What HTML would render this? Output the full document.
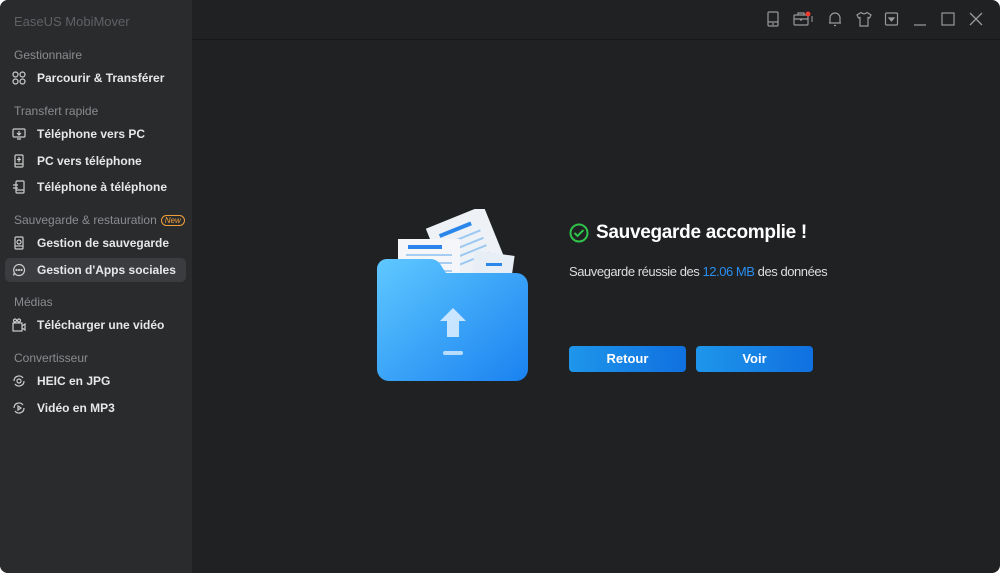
<!DOCTYPE html>
<html><head><meta charset="utf-8"><style>
*{margin:0;padding:0;box-sizing:border-box}
html,body{width:1000px;height:573px;background:#fff;overflow:hidden;font-family:"Liberation Sans",sans-serif}
.win{position:absolute;left:0;top:0;width:1000px;height:573px;border-radius:8px;overflow:hidden;background:#202123}
.side{position:absolute;left:0;top:0;width:192px;height:573px;background:#2a2b2d}
.title{position:absolute;left:14px;top:14px;font-size:13px;color:#5f6165}
.sec{position:absolute;left:14px;font-size:12px;color:#8a8c90}
.it{position:absolute;left:5px;width:181px;height:24px;font-size:12px;color:#e6e7e9;font-weight:bold;line-height:24px;padding-left:32px;border-radius:5px}
.it svg{position:absolute;left:7px;top:5px}
.act{background:#3b3c3f}
.new{display:inline-block;font-size:8px;font-style:italic;color:#f0a03a;border:1px solid #f0a03a;border-radius:6px;padding:0 3px;line-height:9px;margin-left:4px;vertical-align:1px}
.hline{position:absolute;left:192px;top:39px;width:808px;height:1px;background:#161718}
.btn{position:absolute;top:346px;width:117px;height:26px;border-radius:4px;background:linear-gradient(90deg,#1e96ea,#1070e0);color:#fff;font-size:13px;font-weight:bold;text-align:center;line-height:26px}
.ic{position:absolute;top:11px}
</style></head><body><div class="win">
<div class="side">
<div class="title">EaseUS MobiMover</div>
<div class="sec" style="top:48px">Gestionnaire</div>
<div class="it" style="top:66px"><svg width="14" height="14" viewBox="0 0 14 14" fill="none" stroke="#ccc" stroke-width="1.2"><circle cx="3.5" cy="3.5" r="2.5"/><circle cx="10.5" cy="3.5" r="2.5"/><circle cx="3.5" cy="10.5" r="2.5"/><circle cx="10.5" cy="10.5" r="2.5"/></svg>Parcourir &amp; Transférer</div>
<div class="sec" style="top:104px">Transfert rapide</div>
<div class="it" style="top:122px"><svg width="14" height="14" viewBox="0 0 14 14" fill="none" stroke="#ccc" stroke-width="1.2"><rect x="1" y="2" width="12" height="8" rx="1"/><path d="M5 12h4M7 4v4M5 6l2 2 2-2"/></svg>Téléphone vers PC</div>
<div class="it" style="top:149px"><svg width="14" height="14" viewBox="0 0 14 14" fill="none" stroke="#ccc" stroke-width="1.2"><rect x="3" y="1" width="8" height="12" rx="1"/><path d="M7 3v5M5 5.5h4M3 10h8"/></svg>PC vers téléphone</div>
<div class="it" style="top:175px"><svg width="14" height="14" viewBox="0 0 14 14" fill="none" stroke="#ccc" stroke-width="1.2"><rect x="4" y="1" width="8" height="12" rx="1"/><path d="M1 5h5M1 8h5M4 10h8"/></svg>Téléphone à téléphone</div>
<div class="sec" style="top:213px">Sauvegarde &amp; restauration<span class="new">New</span></div>
<div class="it" style="top:231px"><svg width="14" height="14" viewBox="0 0 14 14" fill="none" stroke="#ccc" stroke-width="1.2"><rect x="3" y="1" width="8" height="12" rx="1"/><circle cx="7" cy="6" r="2"/><path d="M3 10h8"/></svg>Gestion de sauvegarde</div>
<div class="it act" style="top:258px"><svg width="14" height="14" viewBox="0 0 14 14" fill="none" stroke="#ccc" stroke-width="1.2"><path d="M7 1.5a5.5 5.5 0 1 1-4.5 8.6L1.5 12.5l.8-3A5.5 5.5 0 0 1 7 1.5z"/><circle cx="4.5" cy="7" r=".5"/><circle cx="7" cy="7" r=".5"/><circle cx="9.5" cy="7" r=".5"/></svg>Gestion d'Apps sociales</div>
<div class="sec" style="top:295px">Médias</div>
<div class="it" style="top:313px"><svg width="14" height="14" viewBox="0 0 14 14" fill="none" stroke="#ccc" stroke-width="1.2"><circle cx="3" cy="2.5" r="1.5"/><circle cx="7" cy="2.5" r="1.5"/><rect x="1" y="5" width="9" height="8"/><path d="M10 8l3-2v6l-3-2"/></svg>Télécharger une vidéo</div>
<div class="sec" style="top:351px">Convertisseur</div>
<div class="it" style="top:369px"><svg width="14" height="14" viewBox="0 0 14 14" fill="none" stroke="#ccc" stroke-width="1.2"><path d="M2 7a5 5 0 0 1 9-3M12 7a5 5 0 0 1-9 3"/><circle cx="7" cy="7" r="2"/></svg>HEIC en JPG</div>
<div class="it" style="top:396px"><svg width="14" height="14" viewBox="0 0 14 14" fill="none" stroke="#ccc" stroke-width="1.2"><path d="M2 7a5 5 0 0 1 9-3M12 7a5 5 0 0 1-9 3"/><path d="M6 5v4l3-2z"/></svg>Vidéo en MP3</div>
</div>
<div class="hline"></div>
<svg class="ic" style="left:766px" width="14" height="16" viewBox="0 0 14 16" fill="none" stroke="#999" stroke-width="1.2"><rect x="2" y="1" width="10" height="14" rx="1"/><path d="M2 11h10M6 13h2"/></svg>
<svg class="ic" style="left:793px" width="20" height="16" viewBox="0 0 20 16" fill="none" stroke="#999" stroke-width="1.2"><rect x="1" y="4" width="14" height="10" rx="1"/><path d="M5 4V2h6v2M1 8h14M7 9h2"/><circle cx="15" cy="3" r="2.5" fill="#f03a2e" stroke="none"/><path d="M19 5v6" stroke="#888"/></svg>
<svg class="ic" style="left:828px" width="14" height="16" viewBox="0 0 14 16" fill="none" stroke="#999" stroke-width="1.2"><path d="M2 12V7a5 5 0 0 1 10 0v5zM1 12h12M6 14.5h2"/></svg>
<svg class="ic" style="left:856px" width="16" height="16" viewBox="0 0 16 16" fill="none" stroke="#999" stroke-width="1.2"><path d="M5 1.5L1 4l1.5 3L4 6.5V15h8V6.5l1.5.5L15 4l-4-2.5Q8 4 5 1.5z"/></svg>
<svg class="ic" style="left:884px" width="15" height="16" viewBox="0 0 15 16" fill="none" stroke="#999" stroke-width="1.2"><rect x="1.5" y="2" width="12" height="12" rx="1"/><path d="M5 7h5l-2.5 3z" fill="#999"/></svg>
<svg class="ic" style="left:912px" width="16" height="16" viewBox="0 0 16 16" stroke="#999" stroke-width="1.2"><path d="M2 14h12"/></svg>
<svg class="ic" style="left:940px" width="16" height="16" viewBox="0 0 16 16" fill="none" stroke="#999" stroke-width="1.2"><rect x="2" y="2" width="12" height="12"/></svg>
<svg class="ic" style="left:968px" width="16" height="16" viewBox="0 0 16 16" stroke="#999" stroke-width="1.3"><path d="M2 2l12 12M14 2L2 14"/></svg>

<svg style="position:absolute;left:376px;top:209px" width="156" height="172" viewBox="0 0 156 172">
<defs><linearGradient id="f" x1="0" y1="0" x2="1" y2="1"><stop offset="0" stop-color="#5fc8ff"/><stop offset="1" stop-color="#1a82f0"/></linearGradient></defs>
<g transform="rotate(-22 85 40)"><rect x="60" y="8" width="62" height="72" fill="#eef2f7"/><rect x="70" y="18" width="34" height="4" fill="#2a86ea"/><path d="M70 30h40M70 38h40M70 46h40M70 54h40" stroke="#9cc8f2" stroke-width="2"/></g>
<rect x="96" y="44" width="40" height="40" fill="#e8eef5" transform="rotate(8 116 64)"/><rect x="110" y="54" width="16" height="3" fill="#2a86ea"/>
<rect x="22" y="30" width="62" height="60" fill="#f4f6f9"/><rect x="32" y="36" width="34" height="4" fill="#2a86ea"/><path d="M30 46h46M30 54h46M30 62h46" stroke="#a6cdf3" stroke-width="2"/>
<path d="M10 50h44q8 0 12 8l4 6h70a12 12 0 0 1 12 12v84a12 12 0 0 1-12 12H13a12 12 0 0 1-12-12V60a10 10 0 0 1 9-10z" fill="url(#f)"/>
<path d="M77 99l-13 13h7v16h12v-16h7z" fill="#d8ecff" opacity=".9"/>
<rect x="67" y="142" width="20" height="4" rx="2" fill="#d8ecff" opacity=".8"/>
</svg>

<svg style="position:absolute;left:569px;top:223px" width="20" height="20" viewBox="0 0 20 20" fill="none" stroke="#2fc34a" stroke-width="2"><circle cx="10" cy="10" r="8.5"/><path d="M5.5 10l3 3 6-6"/></svg>
<div style="position:absolute;left:596px;top:222px;font-size:19px;font-weight:bold;color:#fff;letter-spacing:-.3px">Sauvegarde accomplie !</div>
<div style="position:absolute;left:569px;top:264px;font-size:13px;color:#dcdde0;letter-spacing:-.45px">Sauvegarde réussie des <span style="color:#2a8ef0">12.06 MB</span> des données</div>
<div class="btn" style="left:569px">Retour</div>
<div class="btn" style="left:696px">Voir</div>
</div></body></html>
